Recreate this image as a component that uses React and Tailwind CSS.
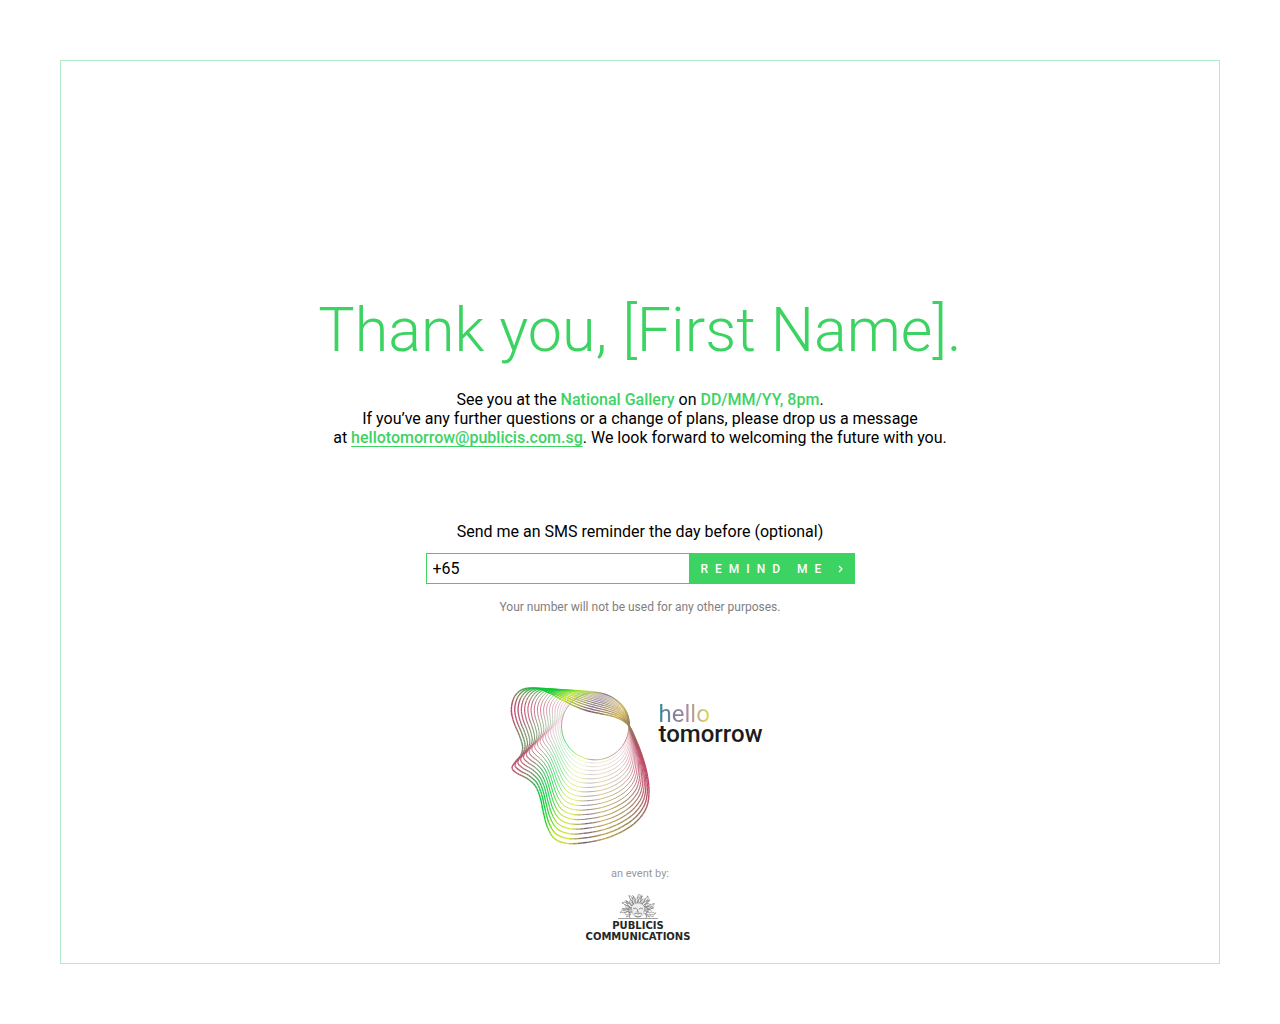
import React from "react";

// Outline of the face: x, y, matching angle on the eye circle, stroke colour.
const OUTLINE = [
  [390, 155, 0, [150, 125, 95]],
  [408, 192, 7, [165, 95, 95]],
  [426, 238, 16, [185, 75, 100]],
  [441, 290, 26, [190, 70, 100]],
  [448, 345, 37, [190, 70, 100]],
  [441, 396, 48, [165, 95, 95]],
  [412, 438, 60, [145, 120, 85]],
  [368, 469, 70, [165, 140, 75]],
  [318, 490, 81, [190, 160, 70]],
  [262, 502, 93, [110, 85, 105]],
  [206, 506, 106, [215, 225, 40]],
  [164, 491, 118, [180, 220, 30]],
  [142, 455, 129, [60, 205, 45]],
  [130, 410, 139, [10, 200, 50]],
  [121, 368, 150, [10, 200, 60]],
  [106, 332, 162, [50, 170, 80]],
  [80, 309, 174, [120, 130, 90]],
  [52, 295, 183, [175, 85, 100]],
  [36, 279, 190, [200, 60, 105]],
  [46, 260, 195, [180, 80, 105]],
  [62, 241, 199, [155, 105, 100]],
  [68, 215, 204, [110, 150, 100]],
  [58, 180, 209, [125, 135, 100]],
  [42, 142, 214, [180, 80, 105]],
  [34, 103, 220, [195, 60, 105]],
  [43, 65, 228, [140, 125, 90]],
  [66, 43, 236, [60, 165, 75]],
  [100, 38, 244, [20, 190, 60]],
  [142, 50, 253, [20, 205, 50]],
  [184, 72, 264, [190, 225, 20]],
  [228, 94, 278, [160, 150, 70]],
  [265, 107, 290, [110, 85, 110]],
  [307, 116, 304, [160, 135, 85]],
  [345, 125, 320, [200, 165, 60]],
  [371, 137, 340, [165, 140, 80]],
];

const CIRCLE = { x: 286, y: 153, r: 101 };
const LINES = 20;
const STEPS = 4;

function spline(a, b, c, d, t) {
  return (
    0.5 *
    (2 * b + (c - a) * t + (2 * a - 5 * b + 4 * c - d) * t * t + (3 * b - a - 3 * c + d) * t * t * t)
  );
}

function samplePoints() {
  const n = OUTLINE.length;
  const out = [];
  for (let i = 0; i < n; i++) {
    const [a, b, c, d] = [-1, 0, 1, 2].map((k) => OUTLINE[(i + k + n) % n]);
    for (let s = 0; s < STEPS; s++) {
      const t = s / STEPS;
      const next = c[2] < b[2] ? c[2] + 360 : c[2];
      const deg = b[2] + (next - b[2]) * t;
      const angle = (deg * Math.PI) / 180;
      // Lines between the brow and the eye swell outwards a little.
      const swell = deg > 230 ? Math.sin(((deg - 230) / 130) * Math.PI) * 40 : 0;
      out.push({
        deg,
        x: spline(a[0], b[0], c[0], d[0], t),
        y: spline(a[1], b[1], c[1], d[1], t),
        cx: CIRCLE.x + CIRCLE.r * Math.cos(angle),
        cy: CIRCLE.y + CIRCLE.r * Math.sin(angle),
        sx: swell * Math.cos(angle),
        sy: swell * Math.sin(angle),
        color: b[3].map((v, j) => Math.round(v + (c[3][j] - v) * t)),
      });
    }
  }
  return out;
}

function FaceLogo() {
  const pts = samplePoints();
  const segments = [];
  for (let k = 0; k < LINES; k++) {
    const f = Math.pow(k / (LINES - 1), 1.1);
    const bulge = 2 * f * (1 - f);
    const width = k === 0 ? 2.4 : 1 + 3.2 * f;
    const place = (p) => [
      (p.cx + (p.x - p.cx) * f + p.sx * bulge).toFixed(1),
      (p.cy + (p.y - p.cy) * f + p.sy * bulge).toFixed(1),
    ];
    pts.forEach((p, i) => {
      const q = pts[(i + 1) % pts.length];
      const [x1, y1] = place(p);
      const [x2, y2] = place(q);
      const faint = p.deg > 262 ? 0.2 + 0.8 * f : 0.55 + 0.45 * f;
      segments.push(
        <line
          key={k + "-" + i}
          x1={x1}
          y1={y1}
          x2={x2}
          y2={y2}
          stroke={`rgb(${p.color.join(",")})`}
          strokeWidth={width}
          strokeOpacity={k === 0 ? 0.85 : faint}
        />
      );
    });
  }
  return (
    <svg viewBox="30 30 424 482" className="h-[161px] w-[141px] shrink-0" strokeLinecap="butt" aria-hidden="true">
      {segments}
    </svg>
  );
}

function LionCrest() {
  const rays = [];
  for (let i = 0; i < 13; i++) {
    const deg = -96 + i * 16;
    const len = i % 2 ? 18 : 21;
    rays.push(
      <g key={i} transform={`translate(21 17) rotate(${deg})`}>
        <path
          transform={`scale(${i % 2 ? -0.8 : 0.8} ${len / 27})`}
          d="M0-7C-4-10 3-13 0-16C-2-19 2-21 0-23C4-21 2-18 3-16C5-13 1-11 2-8M3-16C6-17 5-20 4-21M-1-11C-4-12-4-15-2-17"
        />
      </g>
    );
  }
  return (
    <svg viewBox="0 0 42 26" className="h-[26px] w-[42px]" fill="none" stroke="#777" strokeWidth="0.8" aria-hidden="true">
      <g>{rays}</g>
      <path d="M15 17C13 12 17 9 21 9S29 12 27 17C26 22 24 23 21 23S16 22 15 17Z" fill="#eee" strokeWidth="0.4" />
      <path d="M16 15Q18 13 20 15M22 15Q24 13 26 15M21 15L20 18H22M17 20Q19 18 21 20Q23 18 25 20M18 22Q21 24 24 22" />
      <path d="M13 13Q9 15 12 18T9 23M29 13Q33 15 30 18T33 23M14 20Q11 22 13 24M28 20Q31 22 29 24" />
      <path d="M1 24.5H41" stroke="#888" />
    </svg>
  );
}

export default function App() {
  return (
    <div className="flex min-h-screen bg-white p-[60px] font-['Roboto',sans-serif] text-black">
      <main className="flex flex-1 flex-col items-center border border-[#b5ecc5] px-6 pt-[233px] pb-4 text-center">
        <h1 className="text-[61px] leading-[72px] font-light text-[#3dd363]">Thank you, [First Name].</h1>

        <p className="mt-6 text-[16px] leading-[19px]">
          See you at the <strong className="font-medium text-[#3dd363]">National Gallery</strong> on{" "}
          <strong className="font-medium text-[#3dd363]">DD/MM/YY, 8pm</strong>.
          <br />
          If you’ve any further questions or a change of plans, please drop us a message
          <br />
          at{" "}
          <a
            href="mailto:hellotomorrow@publicis.com.sg"
            className="font-medium text-[#3dd363] underline decoration-1 underline-offset-3 [text-decoration-skip-ink:none]"
          >
            hellotomorrow@publicis.com.sg
          </a>
          . We look forward to welcoming the future with you.
        </p>

        <form className="mt-[75px] flex w-full max-w-[429px] flex-col items-center" onSubmit={(e) => e.preventDefault()}>
          <label htmlFor="phone" className="text-[16px] leading-5">
            Send me an SMS reminder the day before (optional)
          </label>
          <div className="mt-[11px] flex h-[31px] w-full">
            <input
              id="phone"
              type="tel"
              defaultValue="+65"
              className="min-w-0 flex-1 border border-r-0 border-[#3dd363] bg-white px-[6px] text-[16px] outline-none"
            />
            <button
              type="submit"
              className="flex w-[166px] items-center justify-between bg-[#3dd363] pr-3 pl-3 text-[12px] font-medium text-white"
            >
              <span className="tracking-[7px] whitespace-nowrap">REMIND ME</span>
              <svg viewBox="0 0 5 8" className="h-2 w-[5px]" fill="none" stroke="currentColor" strokeWidth="1.2" aria-hidden="true">
                <path d="M1 1L4 4L1 7" />
              </svg>
            </button>
          </div>
          <p className="mt-[15px] text-[12px] leading-4 text-[#808080]">Your number will not be used for any other purposes.</p>
        </form>

        <div className="mt-[70px] flex items-start gap-2 pr-2">
          <FaceLogo />
          <div className="pt-[19px] text-left text-[24px] leading-5">
            <div className="bg-linear-to-r from-[#2a8496] via-[#a57f9f] via-25% to-[#e3e04c] to-50% bg-clip-text text-transparent">
              hello
            </div>
            <div className="font-medium text-[#1c1c1c]">tomorrow</div>
          </div>
        </div>

        <p className="mt-5 text-[11px] leading-4 text-[#999]">an event by:</p>
        <div className="mt-3 flex flex-col items-center pr-1 font-['DejaVu_Sans',sans-serif] text-[10px] leading-[11px] font-bold text-[#262626]">
          <LionCrest />
          <span>PUBLICIS</span>
          <span>COMMUNICATIONS</span>
        </div>
      </main>
    </div>
  );
}
